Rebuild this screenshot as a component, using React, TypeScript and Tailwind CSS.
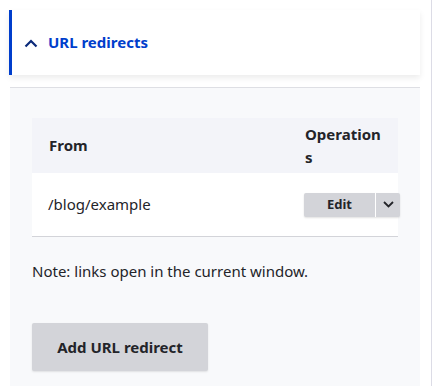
import React from "react";

export default function App() {
  return (
    <div
      className="flex h-[386px] w-[433px] bg-white text-[#232429]"
      style={{ fontFamily: '"Noto Sans", "Open Sans", sans-serif' }}
    >
      <div className="w-[432px] border-r border-[#dcdce6] pt-[10px] pl-[9px] pr-[11px]">
        <div className="flex h-[65px] items-center border-l-[3px] border-[#003ecc] bg-white pl-[11px] shadow-[0_3px_6px_rgba(0,0,0,0.08)]">
          <svg width="14" height="9" viewBox="0 0 14 9" className="ml-[1px] mr-[10px] mt-[1px]">
            <path d="M1.5 7.5 L7 2 L12.5 7.5" fill="none" stroke="#0b2a7a" strokeWidth="2.2" />
          </svg>
          <span className="text-[15px] font-bold text-[#003ecc]">URL redirects</span>
        </div>
        <div className="ml-[1px] mt-[12px] h-[299px] border-t border-[#dedfe4] bg-[#f8f9fb] px-[22px] pt-[30px]">
          <div className="flex flex-col">
            <div className="flex h-[55px] bg-[#f3f4f9] font-bold text-[15px]">
              <div className="flex flex-1 items-center pl-[17px]">From</div>
              <div className="flex w-[109px] items-center pl-[16px] pr-[10px] leading-[23px] [overflow-wrap:anywhere]">
                Operations
              </div>
            </div>
            <div className="flex h-[64px] border-b border-[#d3d4d9] bg-white text-[15px]">
              <div className="flex flex-1 items-center pl-[16px]">/blog/example</div>
              <div className="flex w-[109px] items-center pl-[15px]">
                <div className="flex h-[24px] w-[96px] shrink-0 overflow-hidden rounded-[2px] bg-[#d3d4d9] shadow-[0_1px_2px_rgba(0,0,0,0.12)]">
                  <div className="flex w-[72px] items-center justify-center border-r border-white text-[13px] font-bold">
                    Edit
                  </div>
                  <div className="flex flex-1 items-center justify-center">
                    <svg width="11" height="7" viewBox="0 0 11 7">
                      <path d="M1 1 L5.5 5.5 L10 1" fill="none" stroke="#232429" strokeWidth="1.8" />
                    </svg>
                  </div>
                </div>
              </div>
            </div>
          </div>
          <p className="mt-[24px] text-[15px] leading-[20px]">Note: links open in the current window.</p>
          <button className="mt-[42px] h-[48px] w-[176px] rounded-[2px] bg-[#d3d4d9] text-[15px] font-bold shadow-[0_1px_2px_rgba(0,0,0,0.1)]">
            Add URL redirect
          </button>
        </div>
      </div>
    </div>
  );
}
